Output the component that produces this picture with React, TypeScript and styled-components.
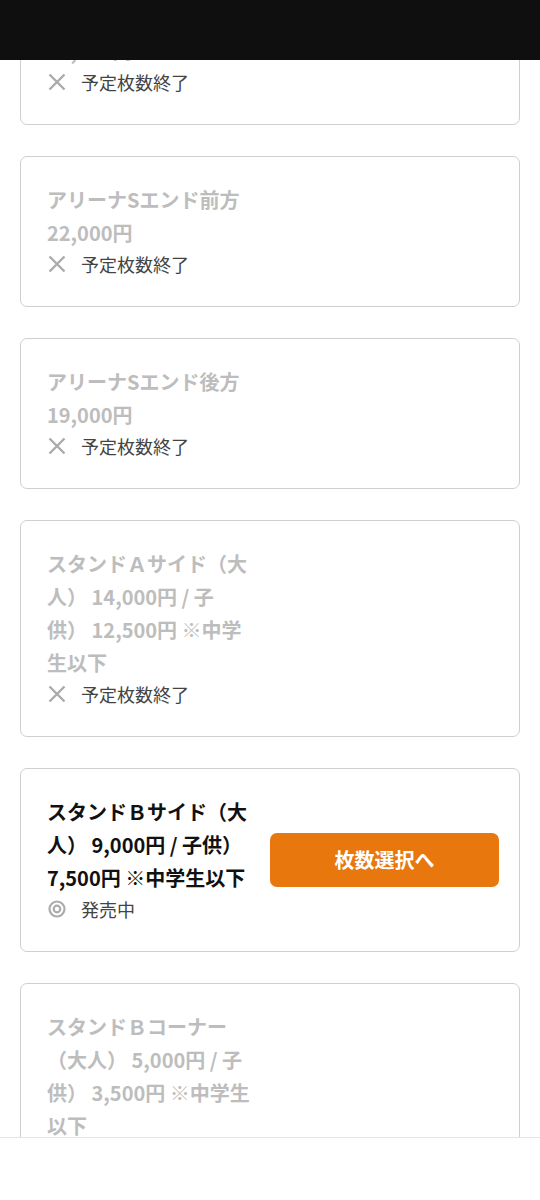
import React from 'react';
import styled, { createGlobalStyle } from 'styled-components';

const GlobalStyle = createGlobalStyle`
  html, body {
    margin: 0;
    padding: 0;
    background: #fff;
  }
  body {
    font-family: "Noto Sans CJK JP", "Noto Sans", sans-serif;
  }
`;

const Page = styled.div`
  height: 1200px;
  display: flex;
  flex-direction: column;
  overflow: hidden;
`;

const Header = styled.div`
  height: 60px;
  flex-shrink: 0;
  background: #0f0f0f;
`;

const Scroller = styled.main`
  flex: 1;
  overflow: hidden;
  padding: 0 20px;
  display: flex;
  flex-direction: column;
  gap: 31px;
`;

const Footer = styled.div`
  height: 62px;
  flex-shrink: 0;
  background: #fff;
  border-top: 1px solid #e6e6e6;
`;

const Card = styled.div<{ $offset?: number }>`
  flex-shrink: 0;
  border: 1px solid #cfcfcf;
  border-radius: 7px;
  padding: 26px 20px 27px 26px;
  display: flex;
  align-items: center;
  gap: 19px;
  margin-top: ${(p) => (p.$offset ? `${p.$offset}px` : '0')};
`;

const Info = styled.div`
  width: 204px;
  flex-shrink: 0;
`;

const Title = styled.div<{ $active?: boolean }>`
  font-size: 20px;
  line-height: 33px;
  font-weight: 700;
  color: ${(p) => (p.$active ? '#111' : '#bdbdbd')};
  line-break: strict;
`;

const Status = styled.div`
  display: flex;
  align-items: center;
  gap: 15px;
  height: 30px;
  padding-left: 1px;
  font-size: 18px;
  color: #444;
`;

const SelectButton = styled.button`
  flex: 1;
  height: 54px;
  border: none;
  border-radius: 7px;
  background: #e8770e;
  color: #fff;
  font-family: inherit;
  font-size: 20px;
  font-weight: 700;
  cursor: pointer;
`;

const CrossIcon = () => (
  <svg width="18" height="18" viewBox="0 0 18 18">
    <path d="M1.5 1.5 L16.5 16.5 M16.5 1.5 L1.5 16.5" stroke="#ababab" strokeWidth="2.4" />
  </svg>
);

const OnSaleIcon = () => (
  <svg width="18" height="18" viewBox="0 0 18 18">
    <circle cx="9" cy="9" r="7.5" fill="none" stroke="#ababab" strokeWidth="2.2" />
    <circle cx="9" cy="9" r="3.3" fill="none" stroke="#ababab" strokeWidth="2.2" />
  </svg>
);

type Seat = {
  lines: string[];
  onSale: boolean;
};

const seats: Seat[] = [
  { lines: ['アリーナSエンド中央', '25,000円'], onSale: false },
  { lines: ['アリーナSエンド前方', '22,000円'], onSale: false },
  { lines: ['アリーナSエンド後方', '19,000円'], onSale: false },
  { lines: ['スタンドＡサイド（大人） 14,000円 / 子供） 12,500円 ※中学生以下'], onSale: false },
  { lines: ['スタンドＢサイド（大人） 9,000円 / 子供） 7,500円 ※中学生以下'], onSale: true },
  { lines: ['スタンドＢコーナー（大人） 5,000円 / 子供） 3,500円 ※中学生以下'], onSale: false },
];

const App: React.FC = () => {
  return (
    <Page>
      <GlobalStyle />
      <Header />
      <Scroller>
        {seats.map((seat, i) => (
          <Card key={i} $offset={i === 0 ? -86 : 0}>
            <Info>
              {seat.lines.map((line) => (
                <Title key={line} $active={seat.onSale}>{line}</Title>
              ))}
              <Status>
                {seat.onSale ? <OnSaleIcon /> : <CrossIcon />}
                <span>{seat.onSale ? '発売中' : '予定枚数終了'}</span>
              </Status>
            </Info>
            {seat.onSale && <SelectButton>枚数選択へ</SelectButton>}
          </Card>
        ))}
      </Scroller>
      <Footer />
    </Page>
  );
};

export default App;
